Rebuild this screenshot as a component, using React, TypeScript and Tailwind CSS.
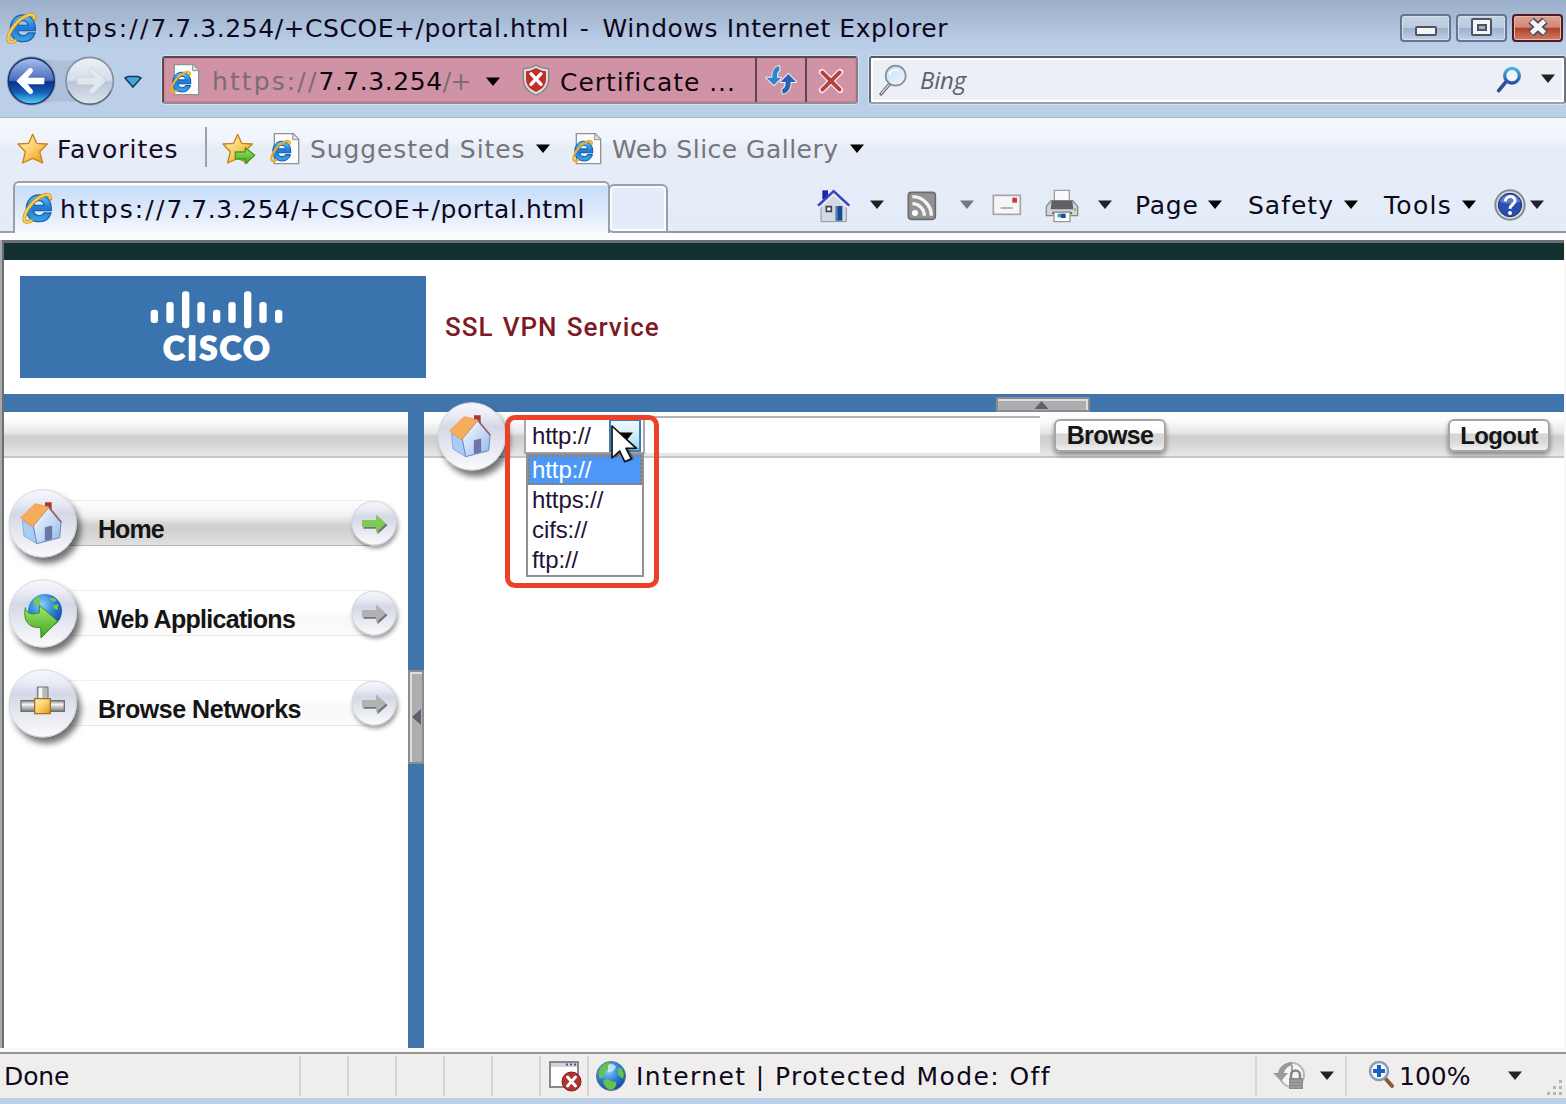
import React from "react";

const VERDANA = "font-['Verdana','DejaVu_Sans',sans-serif]";

function Caret({ className = "text-black" }: { className?: string }) {
  return (
    <svg width="16" height="10" viewBox="0 0 16 10" className={`shrink-0 ${className}`}>
      <path d="M1 0.5h14L8 9z" fill="currentColor" />
    </svg>
  );
}

function Defs() {
  return (
    <svg width="0" height="0" className="absolute">
      <defs>
        <linearGradient id="ie" x1="0" y1="0" x2="0" y2="1">
          <stop offset="0" stopColor="#5fc3f2" />
          <stop offset=".5" stopColor="#1b7ad6" />
          <stop offset="1" stopColor="#3ba6ea" />
        </linearGradient>
        <linearGradient id="gold" x1="0" y1="0" x2="1" y2="1">
          <stop offset="0" stopColor="#fff3c0" />
          <stop offset=".5" stopColor="#fbcf6a" />
          <stop offset="1" stopColor="#e88f10" />
        </linearGradient>
        <linearGradient id="green" x1="0" y1="0" x2="0" y2="1">
          <stop offset="0" stopColor="#a4e86c" />
          <stop offset="1" stopColor="#3da51c" />
        </linearGradient>
        <linearGradient id="back" x1="0" y1="0" x2="0" y2="1">
          <stop offset="0" stopColor="#a9bfec" />
          <stop offset=".48" stopColor="#4a6cc0" />
          <stop offset=".52" stopColor="#0b2f88" />
          <stop offset=".75" stopColor="#1460b8" />
          <stop offset="1" stopColor="#58d4fa" />
        </linearGradient>
        <linearGradient id="fwd" x1="0" y1="0" x2="0" y2="1">
          <stop offset="0" stopColor="#eef2f7" />
          <stop offset=".48" stopColor="#d5dde8" />
          <stop offset=".52" stopColor="#b9c6d8" />
          <stop offset="1" stopColor="#dde6f0" />
        </linearGradient>
        <linearGradient id="disc" x1="0" y1="0" x2="0" y2="1">
          <stop offset="0" stopColor="#f7f8fc" />
          <stop offset=".2" stopColor="#e9ebf4" />
          <stop offset=".36" stopColor="#d4d8e6" />
          <stop offset="1" stopColor="#fbfbfd" />
        </linearGradient>
        <linearGradient id="wall" x1="0" y1="0" x2="1" y2="1">
          <stop offset="0" stopColor="#ffffff" />
          <stop offset="1" stopColor="#8fb9ea" />
        </linearGradient>
        <radialGradient id="globe" cx=".4" cy=".3" r=".8">
          <stop offset="0" stopColor="#8fd0fb" />
          <stop offset=".5" stopColor="#2b7fd6" />
          <stop offset="1" stopColor="#0d3c92" />
        </radialGradient>
        <linearGradient id="metal" x1="0" y1="0" x2="0" y2="1">
          <stop offset="0" stopColor="#8a8a8a" />
          <stop offset=".35" stopColor="#f4f4f4" />
          <stop offset="1" stopColor="#7a7a7a" />
        </linearGradient>
        <linearGradient id="lens" x1="0" y1="0" x2="1" y2="1">
          <stop offset="0" stopColor="#bcdcf8" />
          <stop offset="1" stopColor="#f4faff" />
        </linearGradient>
        <linearGradient id="find" x1="0" y1="0" x2="0" y2="1">
          <stop offset="0" stopColor="#4db4e4" />
          <stop offset="1" stopColor="#2a4fa0" />
        </linearGradient>
        <filter id="bigDrop" x="-20%" y="-20%" width="160%" height="160%">
          <feDropShadow dx="12" dy="18" stdDeviation="9" floodColor="#000" floodOpacity=".55" />
        </filter>
        <filter id="dropSmall" x="-30%" y="-30%" width="180%" height="180%">
          <feDropShadow dx="1.5" dy="3" stdDeviation="2" floodColor="#000" floodOpacity=".4" />
        </filter>
      </defs>
    </svg>
  );
}

function IeLogo({ size = 32 }: { size?: number }) {
  return (
    <svg width={size} height={size} viewBox="0 0 96 96" className="shrink-0">
      <path
        d="M88 56H35c1 10 8 15 17 15 7 0 11-3 14-8h21c-5 17-18 26-35 26C29 89 13 74 13 50S29 9 51 9c24 0 38 17 37 47zM36 40h30c-1-9-6-14-15-14s-14 6-15 14z"
        fill="url(#ie)"
        stroke="#1766b5"
        strokeWidth="4"
      />
      <path
        d="M85 21C86 9 76 4 60 12 36 22 10 55 7 77c-2 14 8 16 22 8"
        fill="none"
        stroke="#c08a20"
        strokeWidth="11"
        strokeLinecap="round"
      />
      <path
        d="M85 19C86 9 76 4 60 12 36 22 10 55 7 77c-2 14 8 16 20 9"
        fill="none"
        stroke="#f8cf4c"
        strokeWidth="7"
        strokeLinecap="round"
      />
    </svg>
  );
}

function IePage() {
  return (
    <svg width="30" height="34" viewBox="0 0 90 102" className="shrink-0">
      <path d="M13 5h57l16 16v74H13z" fill="#fcfcfd" stroke="#8f9297" strokeWidth="4" />
      <path d="M68 5v18h18" fill="#dcdfe4" stroke="#8f9297" strokeWidth="3" />
      <g transform="translate(-1 21) scale(.72 .74)">
        <path
          d="M88 56H35c1 10 8 15 17 15 7 0 11-3 14-8h21c-5 17-18 26-35 26C29 89 13 74 13 50S29 9 51 9c24 0 38 17 37 47zM36 40h30c-1-9-6-14-15-14s-14 6-15 14z"
          fill="url(#ie)"
          stroke="#0f4fa0"
          strokeWidth="4"
        />
        <path d="M85 19C86 9 76 4 60 12 36 22 10 55 7 77c-2 14 8 16 20 9" fill="none" stroke="#eeb02c" strokeWidth="9" strokeLinecap="round" />
      </g>
    </svg>
  );
}

function Star({ arrow = false }: { arrow?: boolean }) {
  return (
    <svg width="34" height="32" viewBox="0 0 102 96" className="shrink-0">
      <path
        d="M47 4l12 27 32 2-23 23 9 34-30-14-30 14 8-34L3 33l32-2z"
        fill="url(#gold)"
        stroke="#c98219"
        strokeWidth="4"
        strokeLinejoin="round"
      />
      {arrow && (
        <path d="M40 57h30V44l28 23-28 25V78H40z" fill="url(#green)" stroke="#3f9a26" strokeWidth="4" strokeLinejoin="round" />
      )}
    </svg>
  );
}

function NavButtons() {
  return (
    <svg width="112" height="54" viewBox="0 0 336 162" className="shrink-0">
      <path d="M80 8q94 24 180 0v146q-86-24-180 0z" fill="#a6b9d1" opacity=".65" />
      <circle cx="76" cy="81" r="74" fill="#90a1ba" />
      <circle cx="76" cy="81" r="69" fill="url(#back)" stroke="#17306e" strokeWidth="4" />
      <path d="M31 81l37-37c8-6 17 3 11 11L65 71h50v20H65l14 16c6 8-3 17-11 11z" fill="#fff" />
      <circle cx="251" cy="81" r="71" fill="url(#fwd)" stroke="#8490a2" strokeWidth="5" />
      <path d="M187 110a71 71 0 0 0 128 0" fill="none" stroke="#5e6773" strokeWidth="4" />
      <path d="M300 81l-38-37c-8-6-17 3-11 11l14 15h-52v22h52l-14 15c-6 8 3 17 11 11z" fill="#e3e8ee" stroke="#c3ccd7" strokeWidth="2" />
    </svg>
  );
}

function Shield() {
  return (
    <svg width="28" height="32" viewBox="0 0 84 96" className="shrink-0">
      <path d="M42 3c12 8 24 11 38 11v30c0 24-14 40-38 49C18 84 4 68 4 44V14C18 14 30 11 42 3z" fill="#ddd" stroke="#85817f" strokeWidth="4" />
      <path d="M42 12c10 6 19 9 30 10v24c0 17-11 30-30 38C23 76 12 63 12 46V22c11-1 20-4 30-10z" fill="#c0302a" />
      <path d="M27 29l30 32M57 29L27 61" stroke="#fff" strokeWidth="10" strokeLinecap="round" />
    </svg>
  );
}

function Refresh() {
  return (
    <svg width="34" height="32" viewBox="0 0 102 96">
      <path
        d="M7 41h18c0-22 6-31 20-35l2 13c-6 3-8 9-8 22h12L30 63z"
        fill="#2f84cf"
        stroke="#eef2fa"
        strokeWidth="6"
        paintOrder="stroke"
        strokeLinejoin="round"
      />
      <path
        d="M96 54H80c0 21-8 32-24 35l-2-13c8-3 11-9 11-22H50l23-24z"
        fill="#2862b4"
        stroke="#eef2fa"
        strokeWidth="6"
        paintOrder="stroke"
        strokeLinejoin="round"
      />
    </svg>
  );
}

function StopX() {
  return (
    <svg width="28" height="28" viewBox="0 0 84 84">
      <path d="M15 15l54 54M69 15L15 69" stroke="#f7e9ec" strokeWidth="19" strokeLinecap="round" />
      <path d="M16 16l52 52M68 16L16 68" stroke="#b83f3b" strokeWidth="11" strokeLinecap="round" />
    </svg>
  );
}

function SearchLens() {
  return (
    <svg width="30" height="34" viewBox="0 0 90 102" className="shrink-0">
      <path d="M34 64L9 93" stroke="#666b72" strokeWidth="10" strokeLinecap="round" />
      <path d="M32 66L10 91" stroke="#d4d7db" strokeWidth="4" strokeLinecap="round" />
      <circle cx="53" cy="38" r="30" fill="url(#lens)" stroke="#888f9a" strokeWidth="5" />
      <path d="M34 36c3-14 16-19 28-13" fill="none" stroke="#fff" strokeWidth="5" />
    </svg>
  );
}

function BlueLens() {
  return (
    <svg width="26" height="28" viewBox="0 0 78 84" className="shrink-0">
      <path d="M31 46L8 74" stroke="#2c4c94" strokeWidth="11" strokeLinecap="round" />
      <circle cx="48" cy="29" r="22" fill="#eef6fb" stroke="url(#find)" strokeWidth="10" />
    </svg>
  );
}

function CommandHome() {
  return (
    <svg width="34" height="34" viewBox="0 0 102 102" className="shrink-0">
      <path d="M16 4h17v26H16z" fill="#1c24b4" />
      <path d="M12 48l38-36 38 36v50H12z" fill="#d5d9e2" stroke="#8f96a1" strokeWidth="3" />
      <path d="M3 50L50 6l47 44" fill="none" stroke="#3442c4" strokeWidth="7" />
      <path d="M9 55L50 16l41 39" fill="none" stroke="#f2f4fa" strokeWidth="4" />
      <path d="M28 53h15v14H28z" fill="#fff" stroke="#394455" strokeWidth="5" />
      <path d="M56 51h20v44H56z" fill="#154a98" />
      <path d="M56 51h6v44h-6z" fill="#5e7fb5" />
    </svg>
  );
}

function Feed() {
  return (
    <svg width="30" height="30" viewBox="0 0 90 90" className="shrink-0">
      <rect x="4" y="4" width="81" height="81" rx="9" fill="#929292" stroke="#6d6d6d" strokeWidth="5" />
      <circle cx="24" cy="66" r="9" fill="#fff" />
      <path d="M16 38a36 36 0 0 1 36 36M16 17a57 57 0 0 1 57 57" fill="none" stroke="#f4f4f4" strokeWidth="10" />
    </svg>
  );
}

function Mail() {
  return (
    <svg width="30" height="22" viewBox="0 0 90 66" className="shrink-0">
      <rect x="4" y="4" width="81" height="57" fill="#f6f6f7" stroke="#a3a5aa" strokeWidth="5" />
      <rect x="61" y="11" width="14" height="15" fill="#d23a34" />
      <path d="M26 42h36" stroke="#a6a8ac" strokeWidth="5" />
    </svg>
  );
}

function Printer() {
  return (
    <svg width="34" height="34" viewBox="0 0 102 102" className="shrink-0">
      <path d="M28 4h45v38H28z" fill="#fafafa" stroke="#a0a0a0" strokeWidth="4" />
      <path d="M4 52l14-17h65l15 17v28H4z" fill="#d3d4d7" stroke="#85878c" strokeWidth="4" strokeLinejoin="round" />
      <path d="M20 35h62l3 26H17z" fill="#5e6066" />
      <path d="M24 68h54l4 6H20z" fill="#2e3036" />
      <path d="M27 70h48v28H27z" fill="#fff" stroke="#999" strokeWidth="4" />
      <path d="M38 74h10v11H38z" fill="#2fa7b3" />
      <path d="M48 74h14v13H48z" fill="#1e4b91" />
      <circle cx="90" cy="62" r="4" fill="#6bd06f" />
    </svg>
  );
}

function Help() {
  return (
    <svg width="32" height="34" viewBox="0 0 96 102" className="shrink-0">
      <circle cx="48" cy="51" r="44" fill="#dadce0" stroke="#858a93" strokeWidth="6" />
      <circle cx="48" cy="51" r="35" fill="#2a4fb0" stroke="#1b2f74" strokeWidth="3" />
      <path d="M17 41a33 33 0 0 1 62 0q-30 12-62 0z" fill="#7d98dc" opacity=".6" />
      <path d="M34 40c1-19 29-19 29-2 0 12-15 11-15 24" fill="none" stroke="#fff" strokeWidth="9" />
      <circle cx="48" cy="75" r="6" fill="#fff" />
    </svg>
  );
}

function OrangeHouse() {
  return (
    <g>
      <path d="M134 92h20v28l-20-8z" fill="#a93a30" />
      <path d="M66 146l34 18 9 52-38-23z" fill="#a6cdf4" stroke="#7895cf" strokeWidth="2" />
      <path d="M99 163l46-56 37 44-4 47-69 18z" fill="url(#wall)" stroke="#6e86c4" strokeWidth="3" strokeLinejoin="round" />
      <path d="M144 105l39 47" stroke="#9d5a62" strokeWidth="5" />
      <path d="M61 139l43-43 42 10-50 60z" fill="#f5ad5b" stroke="#e2903c" strokeWidth="2" strokeLinejoin="round" />
      <path d="M135 168l19-5v38l-19 5z" fill="#6f74aa" stroke="#545a8e" strokeWidth="2" />
    </g>
  );
}

function WebGlobe() {
  return (
    <g transform="translate(0 -274)">
      <circle cx="134" cy="422" r="51" fill="url(#globe)" />
      <path d="M112 377q12 14 6 26l-14 2q-12-10 8-28zM147 385q14-6 22 5-8 9-22-5zM160 404l14-2-2 16-14-4z" fill="#75c94d" />
      <path
        d="M75 412c2 16 20 24 42 15v-22l55 47-50 51-1-32c-34 4-54-18-46-59z"
        fill="url(#green)"
        stroke="#3b8d22"
        strokeWidth="3"
        strokeLinejoin="round"
      />
    </g>
  );
}

function NetworkNode() {
  return (
    <g transform="translate(0 -544)">
      <path d="M111 650h32v42h-32z" fill="#b9b9b9" stroke="#777" strokeWidth="3" />
      <path d="M116 652h10v38h-10z" fill="#f6f6f6" />
      <path d="M62 691h130v32H62z" fill="url(#metal)" stroke="#6f6f6f" strokeWidth="4" />
      <path d="M103 685h47v45h-47z" fill="url(#gold)" stroke="#9c7420" strokeWidth="4" />
    </g>
  );
}

function Disc({ children, className = "" }: { children: React.ReactNode; className?: string }) {
  return (
    <svg width="84" height="84" viewBox="14 40 252 252" className={`shrink-0 ${className}`}>
      <circle cx="127" cy="155" r="101" fill="url(#disc)" stroke="#d3d6e0" strokeWidth="3" filter="url(#bigDrop)" />
      {children}
    </svg>
  );
}

const ARROW = "M13 20h14v-5.500l10 9-10 9v-5.500H13z";

function ArrowDisc({ active }: { active: boolean }) {
  return (
    <svg width="54" height="56" viewBox="0 0 54 56" className="shrink-0">
      <circle cx="25" cy="24" r="22" fill="url(#disc)" stroke="#d0d3dc" filter="url(#dropSmall)" />
      <path d={ARROW} fill="#55595e" opacity=".8" transform="translate(1.500 2.800)" />
      <path d={ARROW} fill={active ? "#7dca58" : "#b2b2b4"} transform="translate(0 1)" />
    </svg>
  );
}

const MENU = [
  { label: "Home", icon: <OrangeHouse />, active: true, tracking: "tracking-[-0.95px]" },
  { label: "Web Applications", icon: <WebGlobe />, active: false, tracking: "tracking-[-0.7px]" },
  { label: "Browse Networks", icon: <NetworkNode />, active: false, tracking: "tracking-[-0.45px]" },
];

interface MenuItemProps {
  label: string;
  icon: React.ReactNode;
  active: boolean;
  tracking: string;
}

function MenuItem({ label, icon, active, tracking }: MenuItemProps) {
  return (
    <li className="relative flex h-[90px] items-start">
      <div
        className={`absolute left-[50px] top-[12px] h-[46px] w-[316px] border-y ${
          active
            ? "border-t-[#ededed] border-b-[#b7b7b7] bg-[linear-gradient(#fff_0%,#f0f0f0_35%,#d4d4d4_52%,#cfcfcf_62%,#e0e0e0_100%)]"
            : "border-t-[#efefef] border-b-[#e6e6e6] bg-[linear-gradient(#fff_0%,#fff_45%,#f8f8f8_60%,#fcfcfc_100%)]"
        }`}
      />
      <Disc className="relative -mt-[3px] ml-[1px]">{icon}</Disc>
      <span
        className={`relative ml-[9px] mt-[26px] w-[247px] shrink-0 whitespace-nowrap font-['Liberation_Sans',Arial,sans-serif] text-[25px] font-bold leading-[30px] text-[#151515] ${tracking}`}
      >
        {label}
      </span>
      <div className="relative mt-[11px] ml-[4px]">
        <ArrowDisc active={active} />
      </div>
    </li>
  );
}

function PortalButton({ children, className }: { children: React.ReactNode; className: string }) {
  return (
    <button
      className={`h-[33px] shrink-0 rounded-[6px] border-2 border-[#a5a5a5] bg-[linear-gradient(#fff_0%,#fbfbfb_40%,#d6d6d6_45%,#dadada_75%,#f2f2f2_100%)] text-center font-['Liberation_Sans',Arial,sans-serif] font-bold leading-[29px] text-[#151515] shadow-[0_3px_5px_rgba(0,0,0,0.4)] ${className}`}
    >
      {children}
    </button>
  );
}

function PageUrl() {
  return (
    <>
      <span className="tracking-[2.1px]">https://</span>
      <span className="tracking-[0.55px]">7.7.3.254/+CSCOE+/portal.html</span>
    </>
  );
}

function TitleBar() {
  return (
    <header className="flex h-[54px] items-start bg-[linear-gradient(#9db0cb_0%,#a8bbd4_35%,#b8cce6_75%,#bbcfe8_100%)]">
      <div className="ml-[6px] mt-[12px]">
        <IeLogo />
      </div>
      <h1 className="ml-[6px] mt-[13px] w-[1356px] shrink-0 whitespace-nowrap text-[25px] leading-[32px] text-[#0d0820]">
        <PageUrl />
        <span className="tracking-[2.8px]"> - </span>
        <span className="tracking-[0.6px]">Windows Internet Explorer</span>
      </h1>
      <div className="mt-[14px] flex shrink-0 gap-[5px]">
        <button className="flex h-[28px] w-[51px] items-center justify-center rounded-[4px] border-2 border-[#64758d] bg-[linear-gradient(#c5d3e4_0%,#bccbdf_48%,#9db2cd_52%,#bdd0e6_100%)] pt-[5px] shadow-[inset_0_0_0_1px_#d5e0ee]">
          <span className="h-[10px] w-[22px] rounded-[2px] border-2 border-[#4d5564] bg-[#f5f5f5]" />
        </button>
        <button className="flex h-[28px] w-[51px] items-center justify-center rounded-[4px] border-2 border-[#64758d] bg-[linear-gradient(#c5d3e4_0%,#bccbdf_48%,#9db2cd_52%,#bdd0e6_100%)] pb-[2px] shadow-[inset_0_0_0_1px_#d5e0ee]">
          <span className="flex h-[18px] w-[21px] items-center justify-center rounded-[2px] border-2 border-[#4d5564] bg-[#f5f5f5]">
            <span className="h-[7px] w-[10px] border-2 border-[#4d5564] bg-[#9db2cd]" />
          </span>
        </button>
        <button className="flex h-[28px] w-[51px] items-center justify-center rounded-[4px] border-2 border-[#4c1d22] bg-[linear-gradient(#dca392_0%,#d18a78_46%,#b14226_52%,#cf7d67_100%)] pb-[2px] shadow-[inset_0_0_0_1px_#e8b9aa]">
          <svg width="24" height="20" viewBox="0 0 24 20">
            <path d="M5 3.500l14 13M19 3.500L5 16.500" stroke="#4d5060" strokeWidth="8" />
            <path d="M5.500 4l13 12M18.500 4l-13 12" stroke="#f6f6f6" strokeWidth="4.500" />
          </svg>
        </button>
      </div>
    </header>
  );
}

function NavigationBar() {
  return (
    <div className="flex h-[64px] items-start border-b border-[#a4b4c9] bg-[#bbcfe8]">
      <div className="ml-[6px]">
        <NavButtons />
      </div>
      <svg width="20" height="14" viewBox="0 0 20 14" className="ml-[5px] mt-[21px] shrink-0">
        <path d="M2 3l3-1.500h10L18 3l-8 9z" fill="#49a5dc" stroke="#18385f" strokeWidth="1.500" />
      </svg>
      <div className="ml-[19px] mt-[2px] flex h-[48px] w-[696px] shrink-0 items-center rounded-[3px] border-2 border-t-[#4f4c51] border-b-[#8d8f98] border-l-[#584a52] border-r-[#8c7c88] bg-[#d093a6] shadow-[0_0_0_1px_#d3e1f0,inset_0_0_0_1px_#d9808f]">
        <div className="ml-[6px] w-[42px] shrink-0">
          <IePage />
        </div>
        <div className="mt-[3px] w-[268px] shrink-0 whitespace-nowrap text-[25px] leading-[32px] text-[#7d6c74]">
          <span className="tracking-[2.1px]">https://</span>
          <span className="tracking-[0.55px] text-[#0a0508]">7.7.3.254</span>
          <span className="tracking-[-0.5px]">/+</span>
        </div>
        <div className="ml-[5px] mt-[3px] w-[37px] shrink-0">
          <Caret />
        </div>
        <Shield />
        <div className="ml-[10px] mt-[5px] w-[195px] shrink-0 whitespace-nowrap text-[25px] leading-[32px] tracking-[0.95px] text-[#12060c]">
          Certificate ...
        </div>
        <button className="flex h-full w-[50px] shrink-0 items-center justify-center border-l-2 border-[#634550]">
          <Refresh />
        </button>
        <button className="flex h-full w-[50px] shrink-0 items-center justify-center border-l-2 border-[#634550] pt-[2px]">
          <StopX />
        </button>
      </div>
      <div className="ml-[11px] mt-[2px] flex h-[48px] w-[697px] shrink-0 items-center rounded-[3px] border-2 border-t-[#55585d] border-b-[#9a9ea6] border-l-[#65686d] border-r-[#6f7379] bg-[#ecf0f6] shadow-[0_0_0_1px_#d3e1f0,inset_0_0_0_2px_#fff]">
        <div className="ml-[7px] w-[42px]">
          <SearchLens />
        </div>
        <div className="w-[576px] font-['Open_Sans',sans-serif] text-[24px] italic leading-[32px] tracking-[-0.2px] text-[#5e6068]">Bing</div>
        <BlueLens />
        <div className="ml-[18px] mt-[-3px]">
          <Caret className="text-[#222]" />
        </div>
      </div>
    </div>
  );
}

function FavoritesBar() {
  return (
    <div className="flex h-[63px] items-center pb-[2px] pl-[17px] text-[25px] leading-[32px]">
      <Star />
      <span className="ml-[6px] mt-[2px] w-[148px] shrink-0 tracking-[0.95px] text-[#170c26]">Favorites</span>
      <span className="mt-[-4px] h-[40px] w-[2px] shrink-0 bg-[#9da1a9]" />
      <div className="ml-[15px]">
        <Star arrow />
      </div>
      <div className="ml-[14px] w-[40px] shrink-0">
        <IePage />
      </div>
      <span className="mt-[2px] w-[225px] shrink-0 whitespace-nowrap tracking-[0.9px] text-[#77747c]">Suggested Sites</span>
      <Caret />
      <div className="ml-[21px] w-[40px] shrink-0">
        <IePage />
      </div>
      <span className="mt-[2px] w-[237px] shrink-0 whitespace-nowrap tracking-[0.48px] text-[#77747c]">Web Slice Gallery</span>
      <Caret />
    </div>
  );
}

function TabBar() {
  return (
    <div className="flex h-[59px] items-start border-b-[7px] border-[#fbfcfe]">
      <div className="mt-[50px] h-[2px] w-[13px] shrink-0 bg-[#9b9fa8]" />
      <div className="flex h-[52px] w-[597px] shrink-0 items-center rounded-t-[6px] border-2 border-b-0 border-[#9b9fa8] bg-[linear-gradient(#fff_0,#fff_2px,#c7ddf7_3px,#dfeafa_60%,#f8faff_100%)] pl-[7px]">
        <IeLogo />
        <span className="ml-[6px] mt-[4px] whitespace-nowrap text-[25px] leading-[32px] text-[#0d0820]">
          <PageUrl />
        </span>
      </div>
      <div className="-ml-[2px] mt-[3px] h-[49px] w-[60px] shrink-0 rounded-t-[6px] rounded-bl-[5px] border-2 border-[#9b9fa8] bg-[#e4ecf9] shadow-[inset_0_0_0_2px_#fbfcfe]" />
      <div className="flex h-[52px] flex-1 items-center border-b-2 border-[#9297a6] pl-[149px] text-[25px] leading-[32px] text-[#0d0820]">
        <CommandHome />
        <Caret className="mt-[-2px] ml-[18px] text-[#222]" />
        <div className="ml-[22px]">
          <Feed />
        </div>
        <Caret className="mt-[-2px] ml-[22px] text-[#77797d]" />
        <div className="ml-[17px] mt-[-2px]">
          <Mail />
        </div>
        <div className="ml-[23px] mt-[-1px]">
          <Printer />
        </div>
        <Caret className="mt-[-2px] ml-[18px] text-[#222]" />
        <span className="ml-[22px] w-[72px] shrink-0 tracking-[0.8px]">Page</span>
        <Caret className="mt-[-2px] text-black" />
        <span className="ml-[25px] w-[95px] shrink-0 tracking-[1px]">Safety</span>
        <Caret className="mt-[-2px] text-black" />
        <span className="ml-[25px] w-[77px] shrink-0 tracking-[1.3px]">Tools</span>
        <Caret className="mt-[-2px] text-black" />
        <div className="ml-[17px] mt-[-2px]">
          <Help />
        </div>
        <Caret className="mt-[-2px] ml-[3px] text-[#222]" />
      </div>
    </div>
  );
}

function CiscoLogo() {
  const bars = [
    { x: 451, y: 147, h: 40 },
    { x: 498, y: 124, h: 63 },
    { x: 545, y: 92, h: 111 },
    { x: 591, y: 124, h: 63 },
    { x: 638, y: 147, h: 40 },
    { x: 684, y: 124, h: 63 },
    { x: 731, y: 92, h: 111 },
    { x: 777, y: 124, h: 63 },
    { x: 824, y: 147, h: 40 },
  ];
  return (
    <div className="flex h-[102px] w-[406px] flex-col items-center bg-[#3b73af] pt-[14px]">
      <svg width="134" height="40" viewBox="449 88 402 120" className="mr-[13px]">
        {bars.map((b) => (
          <rect key={b.x} x={b.x} y={b.y} width="22" height={b.h} rx="9" fill="#fff" />
        ))}
      </svg>
      <div className="mr-[11px] font-['Lato',sans-serif] text-[33px] font-black leading-[34px] tracking-[2.2px] text-white [-webkit-text-stroke:1.5px_white]">
        CISCO
      </div>
    </div>
  );
}

function Banner() {
  return (
    <div className="flex h-[134px] items-start bg-white pl-[16px] pt-[16px]">
      <CiscoLogo />
      <span className="ml-[19px] mt-[35px] whitespace-nowrap font-['Roboto',sans-serif] text-[26px] font-medium leading-[32px] tracking-[0.95px] [word-spacing:2px] text-[#7d1a25]">
        SSL VPN Service
      </span>
    </div>
  );
}

const BAR_BG = "bg-[linear-gradient(#fff_0%,#fbfbfb_20%,#e6e6e6_48%,#cfcfcf_54%,#d3d3d3_70%,#e6e6e6_97%)]";
const SCHEMES = ["http://", "https://", "cifs://", "ftp://"];

function AddressToolbar() {
  return (
    <div className={`relative flex h-[46px] items-start border-b-2 border-[#c6c6c6] ${BAR_BG}`}>
      <Disc className="-mt-[14px] ml-[10px]">
        <OrangeHouse />
      </Disc>
      <div className="ml-[6px] mt-[5px] flex h-[37px] w-[121px] shrink-0 items-center border-2 border-[#a5a8ae] bg-white pl-[6px] font-['Liberation_Sans',Arial,sans-serif] text-[24px] leading-[30px] text-[#241237]">
        <span className="w-[77px] tracking-[-0.2px]">http://</span>
        <div className="flex h-[33px] w-[32px] items-center justify-center border-2 border-[#3b7fb4] bg-[linear-gradient(#eef8fe,#d3ecfb_50%,#9fd2ef)]">
          <Caret className="mt-[2px] ml-[2px] text-black" />
        </div>
      </div>
      <div className="mt-[4px] h-[37px] w-[395px] shrink-0 border-t-2 border-[#b2b1b9] bg-white" />
      <PortalButton className="ml-[14px] mt-[7px] w-[112px] text-[25px] tracking-[-0.6px]">Browse</PortalButton>
      <PortalButton className="ml-auto mr-[14px] mt-[7px] w-[102px] text-[24px] tracking-[-0.6px]">Logout</PortalButton>

      <ul className="absolute left-[102px] top-[41px] w-[118px] border-2 border-[#8f9197] bg-white font-['Liberation_Sans',Arial,sans-serif] text-[24px] leading-[30px] tracking-[-0.1px] text-[#241237]">
        {SCHEMES.map((s, i) => (
          <li
            key={s}
            className={
              i === 0
                ? "h-[30px] bg-[#4c98f8] pl-[4px] text-white outline-2 -outline-offset-2 outline-[#b0783c] outline-dotted"
                : "h-[30px] pl-[4px]"
            }
          >
            {s}
          </li>
        ))}
      </ul>
      <div className="absolute left-[81px] top-[3px] h-[173px] w-[154px] rounded-[10px] border-[5px] border-[#ec4028]" />
      <svg width="34" height="44" viewBox="0 0 102 132" className="absolute left-[186px] top-[12px]">
        <path d="M10 12v88l23-21 15 32 20-9-16-31h31z" fill="#000" opacity=".3" transform="translate(5 4)" />
        <path d="M6 6v96l23-21 15 32 20-9-16-31h31z" fill="#fff" stroke="#111" strokeWidth="5" strokeLinejoin="round" />
      </svg>
    </div>
  );
}

function Portal() {
  return (
    <main className="flex h-[808px] flex-col border-l-2 border-[#a3a9ae] bg-[linear-gradient(90deg,#6f6f6f_2px,#f8f8f8_2px)] pl-[2px]">
      <div className="h-[20px] w-[1560px] border-t-[3px] border-[#6c6f70] bg-[#12302f]" />
      <div className="w-[1560px]">
        <Banner />
      </div>
      <div className="relative h-[18px] w-[1560px] bg-[#3f75ab]">
        <div className="absolute left-[992px] top-[3px] flex h-[15px] w-[94px] items-center justify-center border-2 border-[#8c8b90] bg-[#adaeb2] pr-[4px] shadow-[inset_-1px_1px_0_1px_#e0dedc]">
          <svg width="15" height="8" viewBox="0 0 16 9">
            <path d="M8 0l8 9H0z" fill="#5f6169" />
          </svg>
        </div>
      </div>
      <div className="flex w-[1560px] flex-1 bg-white">
        <aside className="w-[404px] bg-white">
          <div className={`h-[46px] border-b-2 border-[#c6c6c6] ${BAR_BG}`} />
          <ul className="pt-[30px]">
            {MENU.map((m) => (
              <MenuItem key={m.label} {...m} />
            ))}
          </ul>
        </aside>
        <div className="w-[16px] bg-[#3f75ab] pt-[258px]">
          <div className="flex h-[94px] w-[16px] items-center justify-center border-2 border-[#8c8b90] bg-[#adaeb2] shadow-[inset_1px_1px_0_1px_#e0dedc]">
            <svg width="9" height="16" viewBox="0 0 9 16">
              <path d="M0 8l9-8v16z" fill="#5f6169" />
            </svg>
          </div>
        </div>
        <section className="w-[1140px] bg-white">
          <AddressToolbar />
        </section>
      </div>
    </main>
  );
}

function StatusBar() {
  return (
    <footer className="flex h-[46px] items-stretch border-t-2 border-[#979797] bg-[#efeeed] text-[25px] leading-[44px] text-[#0d0820]">
      <span className="w-[299px] shrink-0 pl-[4px] pt-[1px] tracking-[-0.1px]">Done</span>
      {[0, 1, 2, 3, 4].map((i) => (
        <span key={i} className="my-[2px] w-[48px] shrink-0 border-l-2 border-[#d5d5d5]" />
      ))}
      <span className="my-[2px] flex w-[48px] shrink-0 items-center border-l-2 border-[#d5d5d5] pl-[7px]">
        <svg width="34" height="34" viewBox="0 0 34 34">
          <rect x="2" y="3" width="28" height="25" fill="#fff" stroke="#85888e" strokeWidth="2" />
          <path d="M3 4h26v4H3z" fill="#ced3dd" />
          <path d="M18 5.500h2m2 0h2m2 0h2" stroke="#555" strokeWidth="2" />
          <circle cx="23.500" cy="22.500" r="9.500" fill="#b0332f" stroke="#7e1b1b" />
          <path d="M19.500 18l8 9M27.500 18l-8 9" stroke="#fff" strokeWidth="3" strokeLinecap="round" />
        </svg>
      </span>
      <span className="my-[2px] flex w-[668px] shrink-0 items-center border-l-2 border-[#d5d5d5] pl-[6px]">
        <svg width="32" height="32" viewBox="0 0 32 32" className="shrink-0">
          <circle cx="16" cy="16" r="14.500" fill="url(#globe)" stroke="#5d7394" />
          <path d="M3.500 13q2-8 9-10.500l4 1-2 5-5 3-1 6-4 1zM23 9q2-3 4 0l2 5-1 5-5-4zM8 21q5-4 8 0l5 1q1 5-4 8-7 0-9-9z" fill="#66c24a" />
          <path d="M13 5q5-3 8 2-4 7-8 5z" fill="#d3ecfb" opacity=".8" />
        </svg>
        <span className="ml-[9px] mt-[1px] whitespace-nowrap tracking-[1.4px]">Internet | Protected Mode: Off</span>
      </span>
      <span className="my-[2px] flex w-[90px] shrink-0 items-center border-l-2 border-[#d5d5d5] pl-[15px]">
        <svg width="34" height="32" viewBox="0 0 34 32">
          <circle cx="20" cy="15" r="12" fill="#f5f5f5" stroke="#b6b6b6" strokeWidth="2" />
          <path d="M20 5v9" stroke="#a2a2a2" strokeWidth="2" />
          <path d="M20 2C11 3 7 8 6 13H1l8 8 7-8h-4c1-4 3-6 8-8z" fill="#9a9a9a" />
          <path d="M19 18v-3a4 4 0 0 1 9 0v3" fill="none" stroke="#858585" strokeWidth="2.500" />
          <path d="M17 18h14v11H17z" fill="#8c8c8c" />
          <path d="M18 21h12M18 24h12M18 27h12" stroke="#a9a9a9" />
        </svg>
        <Caret className="ml-[13px] text-[#222]" />
      </span>
      <span className="my-[2px] flex flex-1 items-center border-l-2 border-[#d5d5d5] pl-[21px]">
        <svg width="28" height="30" viewBox="0 0 28 30" className="-mt-[2px] shrink-0">
          <path d="M17 18l7 8" stroke="#8d5a38" strokeWidth="4" strokeLinecap="round" />
          <circle cx="11" cy="11" r="9" fill="#f3f8fd" stroke="#8b9bb1" strokeWidth="2.500" />
          <path d="M11 5v12M5 11h12" stroke="#1d5fc0" strokeWidth="4" />
        </svg>
        <span className="ml-[3px] mt-[1px] w-[108px] shrink-0">100%</span>
        <Caret className="text-[#222]" />
        <svg width="18" height="18" viewBox="0 0 18 18" className="ml-[23px] mt-[24px] shrink-0">
          <path d="M13 1h3v3h-3zM7 7h3v3H7zM13 7h3v3h-3zM1 13h3v3H1zM7 13h3v3H7zM13 13h3v3h-3z" fill="#b5b5b5" />
        </svg>
      </span>
    </footer>
  );
}

export default function App() {
  return (
    <div className={`flex h-[1104px] w-[1566px] flex-col overflow-hidden bg-white ${VERDANA}`}>
      <Defs />
      <TitleBar />
      <NavigationBar />
      <div className="bg-[linear-gradient(#f5f8fd_0%,#f0f5fb_18%,#e6edf7_24%,#e4ecf9_100%)]">
        <FavoritesBar />
        <TabBar />
      </div>
      <Portal />
      <div className="h-[4px] bg-[#fafafa]" />
      <StatusBar />
      <div className="h-[6px] bg-[#bbcfe8]" />
    </div>
  );
}
